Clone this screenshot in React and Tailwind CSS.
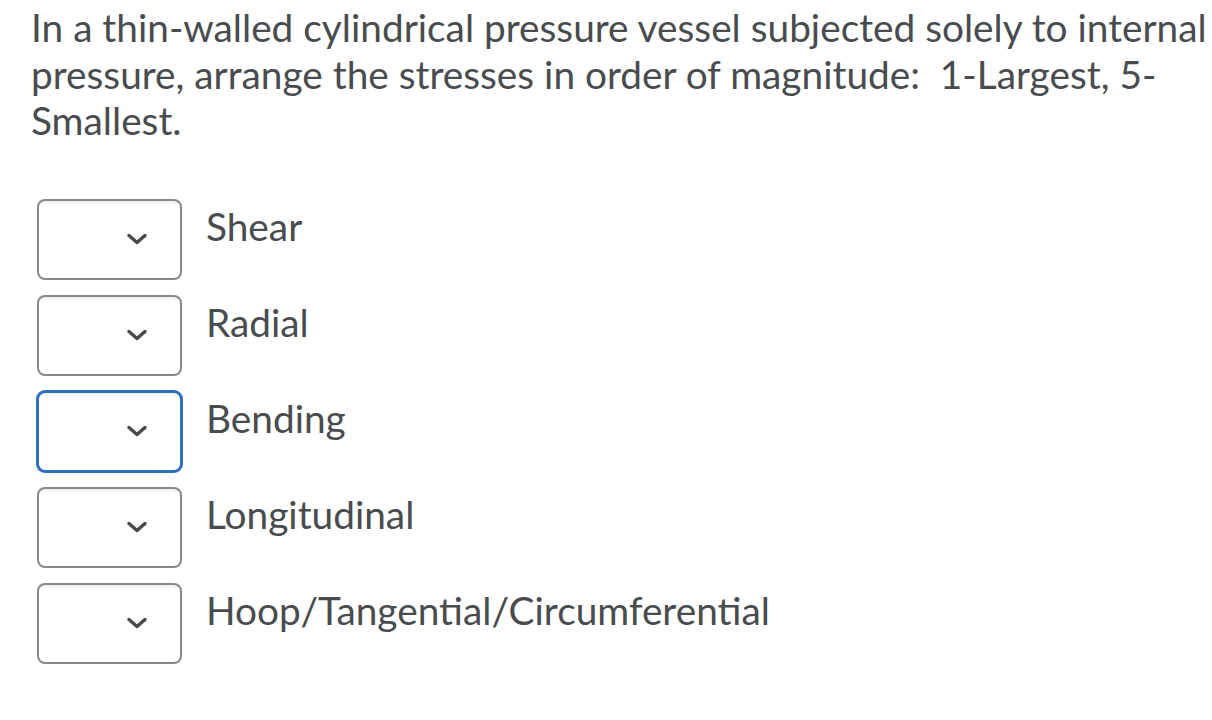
import React, { useState } from 'react';

const stresses = [
  'Shear',
  'Radial',
  'Bending',
  'Longitudinal',
  'Hoop/Tangential/Circumferential',
];

const Chevron = () => (
  <svg
    className="pointer-events-none absolute right-[34px] top-1/2 -translate-y-1/2"
    width="22"
    height="13"
    viewBox="0 0 22 13"
    fill="none"
  >
    <path d="M3 3 L11 10 L19 3" stroke="#494c4e" strokeWidth="3.5" strokeLinecap="round" strokeLinejoin="round" />
  </svg>
);

const RankSelect = ({ value, onChange, focused }) => (
  <div className="relative w-[145px] h-[81px] shrink-0">
    <select
      value={value}
      onChange={e => onChange(e.target.value)}
      className={
        'appearance-none w-full h-full rounded-[8px] border-2 bg-white outline-none shadow-[inset_0_4px_3px_-2px_rgba(0,0,0,0.07)] text-transparent ' +
        (focused
          ? 'border-[#2f6fbf] ring-1 ring-[#2f6fbf]'
          : 'border-[#868a8e]')
      }
    >
      <option value=""></option>
      {[1, 2, 3, 4, 5].map(n => (
        <option key={n} value={n}>{n}</option>
      ))}
    </select>
    <Chevron />
  </div>
);

const App = () => {
  const [ranks, setRanks] = useState(['', '', '', '', '']);

  const setRank = (i, v) => {
    const next = [...ranks];
    next[i] = v;
    setRanks(next);
  };

  return (
    <div className="min-h-screen bg-white text-[#494c4e] pl-[31px] pt-[4px] font-['Lato','Liberation_Sans',sans-serif]">
      <p className="text-[38.8px] leading-[46.5px] whitespace-pre-wrap">
        {'In a thin-walled cylindrical pressure vessel subjected solely to internal pressure, arrange the stresses in order of magnitude:  1-Largest, 5-Smallest.'}
      </p>

      <div className="mt-[55px] pl-[6px] flex flex-col gap-[15px]">
        {stresses.map((label, i) => (
          <div key={label} className="flex items-start gap-[24px]">
            <RankSelect value={ranks[i]} onChange={v => setRank(i, v)} focused={i === 2} />
            <span className="pt-[4px] text-[38.8px] leading-[46px]">{label}</span>
          </div>
        ))}
      </div>
    </div>
  );
};

export default App;
